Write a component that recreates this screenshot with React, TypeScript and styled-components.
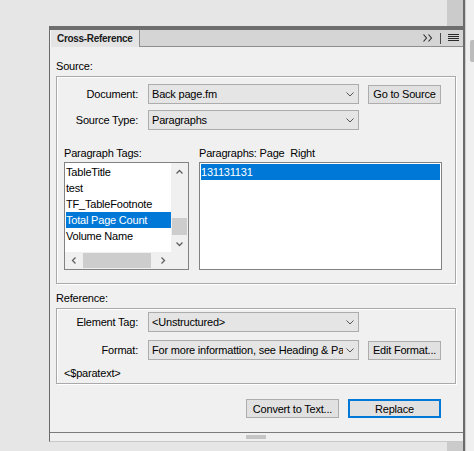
import React from 'react';
import styled, { createGlobalStyle, css } from 'styled-components';

const GlobalStyle = createGlobalStyle`
  html, body {
    margin: 0;
    padding: 0;
    background: #e6e6e6;
  }
  body {
    font-family: 'Liberation Sans', Arial, sans-serif;
    font-size: 11px;
    letter-spacing: -0.2px;
    color: #000;
  }
  * {
    box-sizing: border-box;
  }
`;

const Screen = styled.div`
  display: flex;
  width: 474px;
  height: 451px;
  overflow: hidden;
`;

const Workspace = styled.div`
  position: relative;
  width: 463px;
  height: 100%;
  background: #e6e6e6;
  display: flex;
  justify-content: flex-end;
`;

const DocScrollbar = styled.div`
  width: 16px;
  height: 100%;
  background: #cbcbcb;
`;

const Divider = styled.div`
  width: 2px;
  background: #6b6b6b;
`;

const SidePanel = styled.div`
  flex: 1;
  background: #f0f0f0;
  border-left: 1px solid #cdcdcd;
  display: flex;
  flex-direction: column;
  align-items: flex-end;
  padding-top: 40px;
`;

const SideThumb = styled.div`
  width: 4px;
  height: 22px;
  background: #bcbcbc;
  border-radius: 2px 0 0 2px;
`;

/* floating palette window over the document */
const Palette = styled.section`
  position: absolute;
  left: 49px;
  top: 26px;
  width: 414px;
  height: 416px;
  display: flex;
  flex-direction: column;
  background: #f0f0f0;
  border-top: 4px solid #6e6e6e;
  border-left: 1px solid #6a6a6a;
  border-bottom: 1px solid #c9c9c9;
`;

const TabBar = styled.div`
  display: flex;
  align-items: stretch;
  height: 17px;
  flex: none;
  background: #d5d5d5;
  border-bottom: 1px solid #8e8e8e;
`;

const Tab = styled.div`
  width: 90px;
  margin-bottom: -1px;
  padding-left: 6px;
  display: flex;
  align-items: center;
  background: #e4e4e4;
  border-left: 1px solid #f7f7f7;
  border-right: 1px solid #8e8e8e;
  font-weight: bold;
  font-size: 10px;
  letter-spacing: -0.3px;
  color: #1a1a1a;
`;

const TabTools = styled.div`
  margin-left: auto;
  display: flex;
  align-items: center;
  padding-right: 4px;
`;

const ToolSep = styled.div`
  width: 1px;
  height: 11px;
  margin: 0 7px;
  background: #4a4a4a;
`;

const Body = styled.div`
  flex: 1;
  display: flex;
  flex-direction: column;
  padding: 12px 7px 0 6px;
`;

const SectionLabel = styled.div<{ $gap?: number }>`
  line-height: 14px;
  height: 14px;
  margin-top: ${p => p.$gap ?? 0}px;
`;

const GroupBox = styled.div<{ $pad: string }>`
  margin-top: 3px;
  padding: ${p => p.$pad};
  border: 1px solid #a9a9a9;
  box-shadow: inset 1px 1px 0 #fff, 1px 1px 0 #fff;
`;

const FormGrid = styled.div<{ $rowGap: number }>`
  display: grid;
  grid-template-columns: 82px 211px 73px;
  grid-auto-rows: 20px;
  column-gap: 9px;
  row-gap: ${p => p.$rowGap}px;
  align-items: center;
`;

const FieldLabel = styled.div`
  text-align: right;
  padding-right: 1px;
  white-space: nowrap;
`;

const SelectBox = styled.div`
  display: flex;
  align-items: center;
  width: 211px;
  height: 20px;
  padding: 0 4px 0 3px;
  border: 1px solid #acacac;
  background: #e5e5e5;
`;

const SelectValue = styled.span`
  flex: 1;
  overflow: hidden;
  white-space: nowrap;
`;

const PushButton = styled.button<{ $width: number; $default?: boolean }>`
  width: ${p => p.$width}px;
  height: 19px;
  padding: 0;
  font: inherit;
  letter-spacing: inherit;
  color: #000;
  background: #e1e1e1;
  border: 1px solid #adadad;
  ${p =>
    p.$default &&
    css`
      border: 2px solid #0078d7;
    `}
`;

const ListsRow = styled.div`
  display: flex;
  gap: 10px;
  margin-top: 16px;
  padding-left: 7px;
`;

const ListColumn = styled.div`
  display: flex;
  flex-direction: column;
  gap: 2px;
`;

const ListCaption = styled.div`
  line-height: 14px;
  height: 14px;
  white-space: pre;
`;

const ListFrame = styled.div<{ $width: number }>`
  width: ${p => p.$width}px;
  height: 108px;
  border: 1px solid #828282;
  background: #fff;
`;

const ScrollList = styled(ListFrame)`
  display: grid;
  grid-template-columns: 1fr 17px;
  grid-template-rows: 1fr 17px;
`;

const Items = styled.div`
  overflow: hidden;
  padding: 1px 0 0 1px;
`;

const PlainItems = styled.div`
  padding: 1px;
`;

const Item = styled.div<{ $selected?: boolean }>`
  height: 16px;
  line-height: 16px;
  white-space: nowrap;
  ${p =>
    p.$selected &&
    css`
      background: #0078d7;
      color: #fff;
    `}
`;

const VScroll = styled.div`
  display: flex;
  flex-direction: column;
  background: #f0f0f0;
`;

const HScroll = styled.div`
  display: flex;
  background: #f0f0f0;
`;

const ScrollCorner = styled.div`
  background: #f0f0f0;
`;

const ArrowButton = styled.div`
  flex: none;
  width: 17px;
  height: 17px;
  display: flex;
  align-items: center;
  justify-content: center;
`;

const VThumbTrack = styled.div`
  flex: 1;
  display: flex;
  flex-direction: column;
  justify-content: flex-end;
  align-items: center;
`;

const VThumb = styled.div`
  width: 15px;
  height: 17px;
  background: #cdcdcd;
`;

const HThumbTrack = styled.div`
  flex: 1;
  display: flex;
  align-items: center;
`;

const HThumb = styled.div`
  width: 68px;
  height: 15px;
  margin-left: 1px;
  background: #cdcdcd;
`;

const Paratext = styled.div`
  margin: 6px 0 0 7px;
  line-height: 14px;
  height: 14px;
`;

const ActionRow = styled.div`
  display: flex;
  justify-content: flex-end;
  gap: 9px;
  margin-top: 15px;
  padding-right: 15px;
`;

const Footer = styled.div`
  flex: none;
  height: 9px;
  border-top: 1px solid #7b7b7b;
  display: flex;
  justify-content: center;
  padding-top: 2px;
`;

const Chevron = () => (
  <svg width="8" height="5" viewBox="0 0 8 5" style={{ flex: 'none', marginLeft: 3 }}>
    <path d="M0.5 0.5 L4 4 L7.5 0.5" fill="none" stroke="#555" strokeWidth="1" />
  </svg>
);

const Arrow = ({ dir }: { dir: 'up' | 'down' | 'left' | 'right' }) => {
  const d = {
    up: 'M0.5 4.5 L3.5 1.5 L6.5 4.5',
    down: 'M0.5 1.5 L3.5 4.5 L6.5 1.5',
    left: 'M4.5 0.5 L1.5 3.5 L4.5 6.5',
    right: 'M1.5 0.5 L4.5 3.5 L1.5 6.5',
  }[dir];
  const vertical = dir === 'up' || dir === 'down';
  return (
    <svg width={vertical ? 7 : 6} height={vertical ? 6 : 7}>
      <path d={d} fill="none" stroke="#606060" strokeWidth="1.3" />
    </svg>
  );
};

const Select = ({ value }: { value: string }) => (
  <SelectBox>
    <SelectValue>{value}</SelectValue>
    <Chevron />
  </SelectBox>
);

const tags = ['TableTitle', 'test', 'TF_TableFootnote', 'Total Page Count', 'Volume Name'];

export default function App() {
  return (
    <>
      <GlobalStyle />
      <Screen>
        <Workspace>
          <DocScrollbar />
          <Palette>
            <TabBar>
              <Tab>Cross-Reference</Tab>
              <TabTools>
                <svg width="10" height="8" viewBox="0 0 10 8">
                  <path d="M0.5 0.5 L3.5 4 L0.5 7.5 M5.5 0.5 L8.5 4 L5.5 7.5" fill="none" stroke="#2a2a2a" strokeWidth="1.1" />
                </svg>
                <ToolSep />
                <svg width="11" height="8" viewBox="0 0 11 8">
                  <path d="M0 0.5 H11 M0 2.5 H11 M0 4.5 H11 M0 6.5 H11" stroke="#2a2a2a" strokeWidth="1" />
                </svg>
              </TabTools>
            </TabBar>
            <Body>
              <SectionLabel>Source:</SectionLabel>
              <GroupBox $pad="7px 0 13px 0">
                <FormGrid $rowGap={6}>
                  <FieldLabel>Document:</FieldLabel>
                  <Select value="Back page.fm" />
                  <PushButton $width={73}>Go to Source</PushButton>
                  <FieldLabel>Source Type:</FieldLabel>
                  <Select value="Paragraphs" />
                  <span />
                </FormGrid>
                <ListsRow>
                  <ListColumn>
                    <ListCaption>Paragraph Tags:</ListCaption>
                    <ScrollList $width={125}>
                      <Items>
                        {tags.map(t => (
                          <Item key={t} $selected={t === 'Total Page Count'}>
                            {t}
                          </Item>
                        ))}
                      </Items>
                      <VScroll>
                        <ArrowButton>
                          <Arrow dir="up" />
                        </ArrowButton>
                        <VThumbTrack>
                          <VThumb />
                        </VThumbTrack>
                        <ArrowButton>
                          <Arrow dir="down" />
                        </ArrowButton>
                      </VScroll>
                      <HScroll>
                        <ArrowButton>
                          <Arrow dir="left" />
                        </ArrowButton>
                        <HThumbTrack>
                          <HThumb />
                        </HThumbTrack>
                        <ArrowButton>
                          <Arrow dir="right" />
                        </ArrowButton>
                      </HScroll>
                      <ScrollCorner />
                    </ScrollList>
                  </ListColumn>
                  <ListColumn>
                    <ListCaption>{'Paragraphs: Page  Right'}</ListCaption>
                    <ListFrame $width={243}>
                      <PlainItems>
                        <Item $selected>131131131</Item>
                      </PlainItems>
                    </ListFrame>
                  </ListColumn>
                </ListsRow>
              </GroupBox>

              <SectionLabel $gap={7}>Reference:</SectionLabel>
              <GroupBox $pad="3px 0 3px 0">
                <FormGrid $rowGap={8}>
                  <FieldLabel>Element Tag:</FieldLabel>
                  <Select value="<Unstructured>" />
                  <span />
                  <FieldLabel>Format:</FieldLabel>
                  <Select value="For more informattion, see Heading & Pa" />
                  <PushButton $width={73}>Edit Format...</PushButton>
                </FormGrid>
                <Paratext>{'<$paratext>'}</Paratext>
              </GroupBox>

              <ActionRow>
                <PushButton $width={93}>Convert to Text...</PushButton>
                <PushButton $width={93} $default>
                  Replace
                </PushButton>
              </ActionRow>
            </Body>
            <Footer>
              <svg width="21" height="4" viewBox="0 0 21 4">
                {Array.from({ length: 10 }, (_, i) => (
                  <rect key={i} x={i * 2 + 0.5} y="0" width="1" height="4" fill="#9a9a9a" />
                ))}
              </svg>
            </Footer>
          </Palette>
        </Workspace>
        <Divider />
        <SidePanel>
          <SideThumb />
        </SidePanel>
      </Screen>
    </>
  );
}
